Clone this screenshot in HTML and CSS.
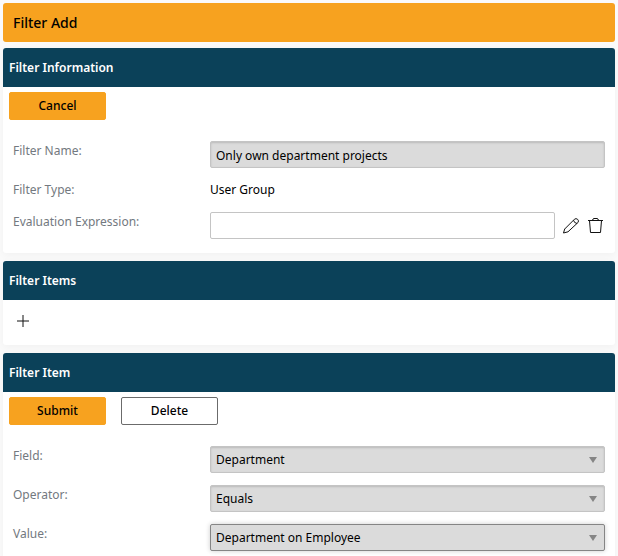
FILE: index.html
```html
<!DOCTYPE html>
<html lang="en">
<head>
<meta charset="utf-8">
<title>Filter Add</title>
<link rel="stylesheet" href="styles.css">
</head>
<body>
<main class="page">
  <h1 class="title">Filter Add</h1>

  <section class="panel">
    <h2 class="panel-head">Filter Information</h2>
    <div class="panel-body">
      <div class="actions"><button class="btn btn-primary" type="button">Cancel</button></div>
      <div class="form">
        <label class="label" for="name">Filter Name:</label>
        <input class="control filled" id="name" type="text" value="Only own department projects" readonly>
        <span class="label">Filter Type:</span>
        <span class="value">User Group</span>
        <label class="label" for="expr">Evaluation Expression:</label>
        <div class="with-icons">
          <input class="control" id="expr" type="text">
          <button class="icon-btn" type="button" aria-label="Edit expression">
            <svg width="18" height="18" viewBox="0 0 18 18"><path d="M1.500 16L2.700 12L12.500 2.200Q14 1 15.600 2.300Q17.200 3.800 16 5.500L6 14.800ZM11.500 3.200Q12 6 15 6.500"/></svg>
          </button>
          <button class="icon-btn" type="button" aria-label="Clear expression">
            <svg width="18" height="18" viewBox="0 0 18 18"><path d="M1 3.500H16M2.500 3.500L3.500 15.500H13.500L14.500 3.500M5.500 3.500Q5.700 1.500 7 1.500H10Q11.300 1.500 11.500 3.500"/></svg>
          </button>
        </div>
      </div>
    </div>
  </section>

  <section class="panel">
    <h2 class="panel-head">Filter Items</h2>
    <div class="panel-body toolbar">
      <button class="icon-btn" type="button" aria-label="Add item">
        <svg width="18" height="18" viewBox="0 0 18 18"><path d="M3 9H15M9 3V15"/></svg>
      </button>
    </div>
  </section>

  <section class="panel">
    <h2 class="panel-head">Filter Item</h2>
    <div class="panel-body">
      <div class="actions">
        <button class="btn btn-primary" type="button">Submit</button>
        <button class="btn" type="button">Delete</button>
      </div>
      <div class="form">
        <label class="label" for="field">Field:</label>
        <div class="select"><select class="control filled" id="field"><option>Department</option></select></div>
        <label class="label" for="operator">Operator:</label>
        <div class="select"><select class="control filled" id="operator"><option>Equals</option></select></div>
        <label class="label" for="value">Value:</label>
        <div class="select"><select class="control filled active" id="value"><option>Department on Employee</option></select></div>
      </div>
    </div>
  </section>
</main>
</body>
</html>
```
FILE: styles.css
```css
* {
  box-sizing: border-box;
}

body {
  margin: 0;
  background: #fafafa;
  color: #000;
  font: 12px/20px "Noto Sans", "Open Sans", sans-serif;
}

button, input, select {
  font: inherit;
  color: inherit;
}

.page {
  display: flex;
  flex-direction: column;
  gap: 8px;
  padding: 3px;
}

.title {
  margin: 0 0 -2px;
  padding: 0 10px;
  border-radius: 3px;
  background: #f7a21f;
  font-size: 14px;
  font-weight: 500;
  line-height: 39px;
}

.panel {
  border-radius: 3px;
  background: #fff;
  box-shadow: 0 2px 8px rgba(0, 0, 0, 0.04);
}

.panel-head {
  margin: 0;
  padding: 0 6px;
  border-radius: 3px 3px 0 0;
  background: #0b4159;
  color: #fff;
  font-size: 12px;
  font-weight: 600;
  line-height: 39px;
}

.panel-body {
  padding: 5px 10px 14px 6px;
}

.toolbar {
  display: flex;
  padding: 12px 11px 15px;
}

.actions {
  display: flex;
  gap: 15px;
  margin-bottom: 21px;
}

.btn {
  width: 97px;
  height: 28px;
  padding: 0;
  border: 1px solid #6b6b6b;
  border-radius: 2px;
  background: #fff;
  font-size: 12px;
  font-weight: 500;
}

.btn-primary {
  border-color: #f7a21f;
  background: #f7a21f;
}

.form {
  display: grid;
  grid-template-columns: 197px 1fr;
  row-gap: 12px;
  padding-left: 4px;
}

.label {
  color: #737980;
}

.control {
  display: block;
  width: 100%;
  min-width: 0;
  height: 27px;
  margin: 0;
  padding: 1px 5px 0;
  border: 1px solid #c4c4c4;
  border-radius: 2px;
  background: #fff;
  outline: 0;
  appearance: none;
}

.filled {
  background: #dbdbdb;
  box-shadow: inset 0 1px 2px rgba(0, 0, 0, 0.15);
}

.active {
  border-color: #858585;
  box-shadow: 0 0 5px rgba(0, 0, 0, 0.2);
}

.select {
  display: grid;
  align-items: center;
}

.select > .control {
  grid-area: 1 / 1;
  padding: 0 5px;
}

.select::after {
  content: "";
  grid-area: 1 / 1;
  justify-self: end;
  margin-right: 8px;
  border: 4px solid transparent;
  border-top: 6px solid #858585;
  border-bottom: 0;
  pointer-events: none;
}

.with-icons {
  display: flex;
  align-items: center;
  gap: 7px;
}

.icon-btn {
  flex: none;
  width: 18px;
  height: 18px;
  padding: 0;
  border: 0;
  background: none;
}

.icon-btn svg {
  display: block;
  fill: none;
  stroke: #111;
  stroke-width: 1;
}
```
